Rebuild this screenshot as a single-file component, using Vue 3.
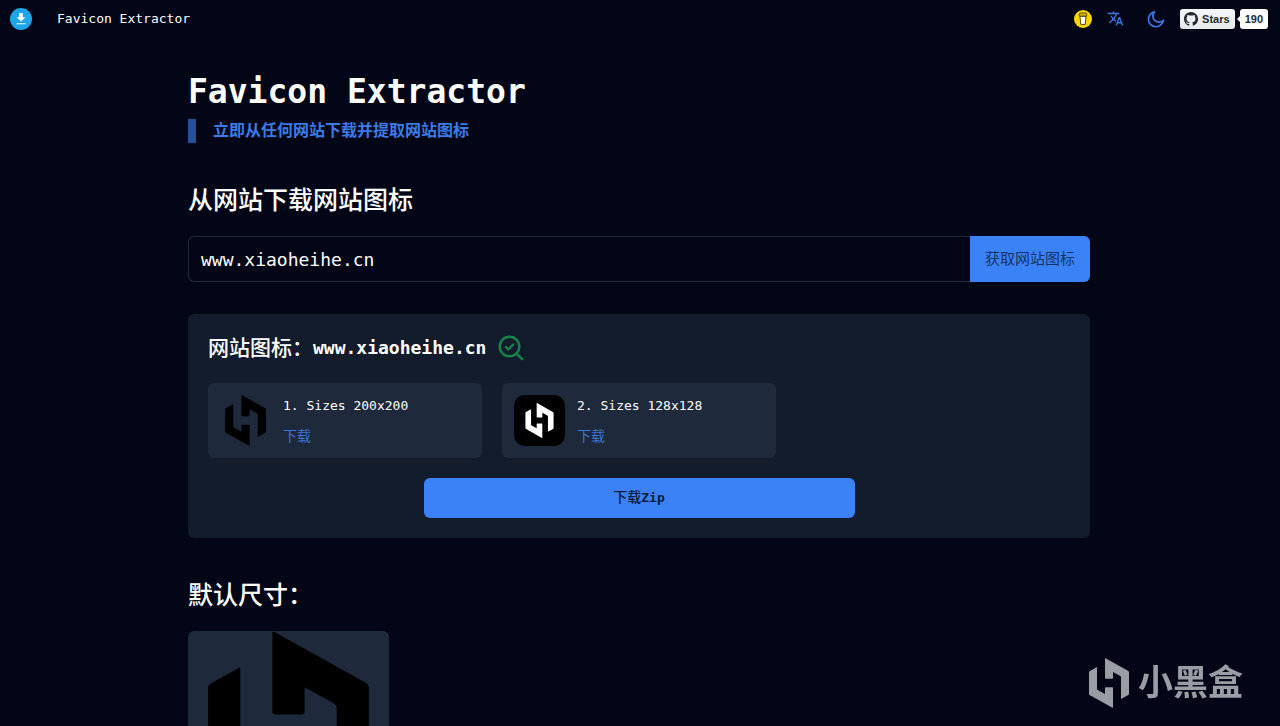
<template>
  <div class="page">
    <header class="navbar">
      <a class="brand" href="#">
        <svg class="brand-logo" viewBox="0 0 22 22" aria-hidden="true">
          <circle cx="11" cy="11" r="11" fill="#1da5ea" />
          <path d="M9.2 5h3.6v4.2h2.6L11 13.6 6.6 9.2h2.6z" fill="#fff" />
          <rect x="6.4" y="15" width="9.2" height="1.4" fill="#b5e2f9" />
        </svg>
        <span>Favicon Extractor</span>
      </a>

      <nav class="tools">
        <a class="coffee" href="#" aria-label="Buy me a coffee">
          <svg viewBox="0 0 18 18">
            <circle cx="9" cy="9" r="9" fill="#fbd804" />
            <path
              d="M5.9 6.2h6.2l-.9 8.2H6.8z"
              fill="#fff"
              stroke="#4d400c"
              stroke-width="1"
            />
            <path
              d="M5.3 4.2l.6-1.2h6.2l.6 1.2v1.9H5.3z"
              fill="#d9b70c"
              stroke="#4d400c"
              stroke-width="0.9"
            />
          </svg>
        </a>
        <button class="icon-button language" type="button" aria-label="语言">
          <svg viewBox="0 0 24 24" fill="currentColor">
            <path
              d="M12.87 15.07l-2.54-2.51.03-.03A17.52 17.52 0 0 0 14.07 6H17V4h-7V2H8v2H1v2h11.17C11.5 7.92 10.44 9.75 9 11.35 8.07 10.32 7.3 9.19 6.69 8h-2c.73 1.63 1.73 3.17 2.98 4.56l-5.09 5.02L4 19l5-5 3.11 3.11.76-2.04zM18.5 10h-2L12 22h2l1.12-3h4.75L21 22h2l-4.5-12zm-2.62 7l1.62-4.33L19.12 17h-3.24z"
            />
          </svg>
        </button>
        <button class="icon-button theme" type="button" aria-label="主题">
          <svg
            viewBox="0 0 24 24"
            fill="none"
            stroke="currentColor"
            stroke-width="2.2"
            stroke-linejoin="round"
          >
            <path d="M10 2.5A8 8 0 0 0 21.8 13.6 10 10 0 1 1 10 2.5z" />
          </svg>
        </button>
        <div class="github">
          <a class="github-button" href="#">
            <svg viewBox="0 0 16 16" fill="currentColor" aria-hidden="true">
              <path
                d="M8 0C3.58 0 0 3.58 0 8c0 3.54 2.29 6.53 5.47 7.59.4.07.55-.17.55-.38 0-.19-.01-.82-.01-1.49-2.01.37-2.53-.49-2.69-.94-.09-.23-.48-.94-.82-1.13-.28-.15-.68-.52-.01-.53.63-.01 1.08.58 1.23.82.72 1.21 1.87.87 2.33.66.07-.52.28-.87.51-1.07-1.78-.2-3.64-.89-3.64-3.95 0-.87.31-1.59.82-2.15-.08-.2-.36-1.02.08-2.12 0 0 .67-.21 2.2.82.64-.18 1.32-.27 2-.27s1.36.09 2 .27c1.53-1.04 2.2-.82 2.2-.82.44 1.1.16 1.92.08 2.12.51.56.82 1.27.82 2.15 0 3.07-1.87 3.75-3.65 3.95.29.25.54.73.54 1.48 0 1.07-.01 1.93-.01 2.2 0 .21.15.46.55.38A8.01 8.01 0 0 0 16 8c0-4.42-3.58-8-8-8z"
              />
            </svg>
            <span>Stars</span>
          </a>
          <a class="github-count" href="#">190</a>
        </div>
      </nav>
    </header>

    <main class="content">
      <h1>Favicon Extractor</h1>
      <p class="subtitle">立即从任何网站下载并提取网站图标</p>

      <h2><label for="site">从网站下载网站图标</label></h2>
      <form class="search" @submit.prevent="extract">
        <input id="site" v-model="site" type="text" />
        <button type="submit">获取网站图标</button>
      </form>

      <section class="result">
        <h3>
          <span>网站图标：</span>
          <span class="domain">{{ domain }}</span>
          <svg
            class="check"
            viewBox="0 0 26 26"
            fill="none"
            stroke="currentColor"
            stroke-width="2.4"
          >
            <circle cx="11.5" cy="11.5" r="9.8" />
            <path d="M18.6 18.6l6 6M7.2 11.4l3.1 3 5.4-5.4" />
          </svg>
        </h3>

        <ul class="icons">
          <li v-for="(icon, index) in icons" :key="icon.sizes" class="icon">
            <svg viewBox="0 0 200 200" aria-hidden="true">
              <template v-if="icon.boxed">
                <rect width="200" height="200" rx="44" fill="#000" />
                <path
                  :d="logoPath"
                  fill="#fff"
                  transform="translate(31 31) scale(0.69)"
                />
              </template>
              <path v-else :d="logoPath" />
            </svg>
            <div class="icon-info">
              <span>{{ index + 1 }}. Sizes {{ icon.sizes }}</span>
              <a href="#">下载</a>
            </div>
          </li>
        </ul>

        <button class="zip" type="button"><span>下载</span>Zip</button>
      </section>

      <h2>默认尺寸：</h2>
      <div class="preview">
        <svg viewBox="0 0 200 200" aria-hidden="true">
          <path :d="logoPath" />
        </svg>
      </div>
    </main>

    <div class="watermark">
      <svg viewBox="20 0 160 200" aria-hidden="true">
        <path :d="logoPath" fill="currentColor" />
      </svg>
      <span>小黑盒</span>
    </div>
  </div>
</template>

<script setup>
import { ref } from "vue";

const site = ref("www.xiaoheihe.cn");
const domain = ref("www.xiaoheihe.cn");

const icons = ref([
  { sizes: "200x200", boxed: false },
  { sizes: "128x128", boxed: true },
]);

// two halves of the mark, the second is the first turned by 180 degrees
const logoPath =
  "M84 2Q84 0 86 1L176 51Q180 53 180 57V143Q180 146 177 148L148 164V77Q148 74 145 72L116 56V80Q116 83 113 83H87Q84 83 84 80Z" +
  "M116 198Q116 200 114 199L24 149Q20 147 20 143V57Q20 54 23 52L52 36V123Q52 126 55 128L84 144V120Q84 117 87 117H113Q116 117 116 120Z";

function extract() {
  if (!site.value) return;
  domain.value = site.value;
}
</script>

<style>
body {
  margin: 0;
  background: #020617;
}
</style>

<style scoped>
.page {
  height: 100vh;
  overflow: hidden;
  background: #020617;
  color: #ffffff;
  font-family: "DejaVu Sans Mono", "Noto Sans CJK SC", monospace;
  font-size: 13px;
}

a {
  color: inherit;
  text-decoration: none;
}

button,
input {
  margin: 0;
  border: 0;
  font-family: inherit;
}

button {
  cursor: pointer;
}

svg {
  display: block;
  flex-shrink: 0;
}

.navbar {
  display: flex;
  align-items: center;
  justify-content: space-between;
  height: 37px;
  padding: 0 12px 0 10px;
}

.brand {
  display: flex;
  align-items: center;
  gap: 25px;
}

.brand-logo {
  width: 22px;
  height: 22px;
}

.tools {
  display: flex;
  align-items: center;
}

.coffee svg {
  width: 18px;
  height: 18px;
}

.icon-button {
  padding: 0;
  background: none;
  color: #3b7be8;
}

.language {
  margin-left: 15px;
}

.language svg {
  width: 17px;
  height: 17px;
}

.theme {
  margin-left: 23px;
}

.theme svg {
  width: 18px;
  height: 18px;
}

.github {
  display: flex;
  align-items: center;
  gap: 5px;
  margin-left: 15px;
  color: #24292f;
  font-family: "Liberation Sans", sans-serif;
  font-size: 11px;
  font-weight: bold;
}

.github-button,
.github-count {
  display: flex;
  align-items: center;
  height: 20px;
  box-sizing: border-box;
  border-radius: 3px;
}

.github-button {
  gap: 4px;
  padding: 0 5px 0 4px;
  background: linear-gradient(#f6f8fa, #e6e9ec);
}

.github-button svg {
  width: 14px;
  height: 14px;
}

.github-count {
  position: relative;
  padding: 0 5px;
  background: #ffffff;
}

.github-count::before {
  content: "";
  position: absolute;
  left: -3px;
  top: 7px;
  border: 3px solid transparent;
  border-left: 0;
  border-right-color: #ffffff;
}

.content {
  max-width: 902px;
  margin: 0 auto;
  padding: 35px 2px 0 0;
}

h1,
h2,
h3,
p,
ul {
  margin: 0;
  padding: 0;
}

h1 {
  font-size: 33px;
  line-height: 40px;
}

.subtitle {
  margin-top: 7px;
  padding-left: 17px;
  border-left: 8px solid #26509c;
  color: #3b7be8;
  font-size: 16px;
  font-weight: bold;
  line-height: 24px;
}

h2 {
  margin-top: 40px;
  font-size: 25px;
  font-weight: 500;
  line-height: 36px;
}

.search {
  display: flex;
  margin-top: 17px;
}

.search input {
  flex: 1;
  min-width: 0;
  height: 46px;
  box-sizing: border-box;
  padding: 0 12px;
  border: 1px solid #1e293b;
  border-right: 0;
  border-radius: 6px 0 0 6px;
  outline: none;
  background: transparent;
  color: #ffffff;
  font-size: 18px;
}

.search button {
  width: 120px;
  padding: 0 0 4px;
  border-radius: 0 6px 6px 0;
  background: #3b82f6;
  color: #153469;
  font-size: 15px;
}

.result {
  margin-top: 32px;
  padding: 20px;
  border-radius: 6px;
  background: #131c2c;
}

h3 {
  display: flex;
  align-items: center;
  font-size: 21px;
  font-weight: 500;
  line-height: 28px;
}

.domain {
  font-size: 18px;
  font-weight: bold;
}

.check {
  width: 26px;
  height: 26px;
  margin-left: 12px;
  color: #16844a;
}

.icons {
  display: grid;
  grid-template-columns: repeat(3, 1fr);
  gap: 20px;
  margin-top: 21px;
  list-style: none;
}

.icon {
  display: flex;
  align-items: center;
  gap: 12px;
  padding: 12px;
  border-radius: 6px;
  background: #1e293b;
}

.icon > svg {
  width: 51px;
  height: 51px;
}

.icon-info {
  display: flex;
  flex-direction: column;
  gap: 10px;
  line-height: 20px;
}

.icon-info a {
  color: #3b72dc;
  font-size: 14px;
}

.zip {
  display: block;
  width: 50%;
  height: 40px;
  margin: 20px auto 0;
  padding: 0 0 4px;
  border-radius: 6px;
  background: #3b82f6;
  color: #0b1a38;
  font-size: 13px;
  font-weight: bold;
}

.zip span {
  font-size: 14px;
  font-weight: 500;
}

.preview {
  width: 201px;
  margin-top: 17px;
  border-radius: 6px;
  background: #1e293b;
}

.watermark {
  position: fixed;
  right: 37px;
  bottom: 18px;
  display: flex;
  align-items: center;
  gap: 9px;
  color: #9b9da4;
  font-size: 35px;
  font-weight: bold;
  line-height: 50px;
}

.watermark svg {
  width: 40px;
  height: 50px;
}
</style>
